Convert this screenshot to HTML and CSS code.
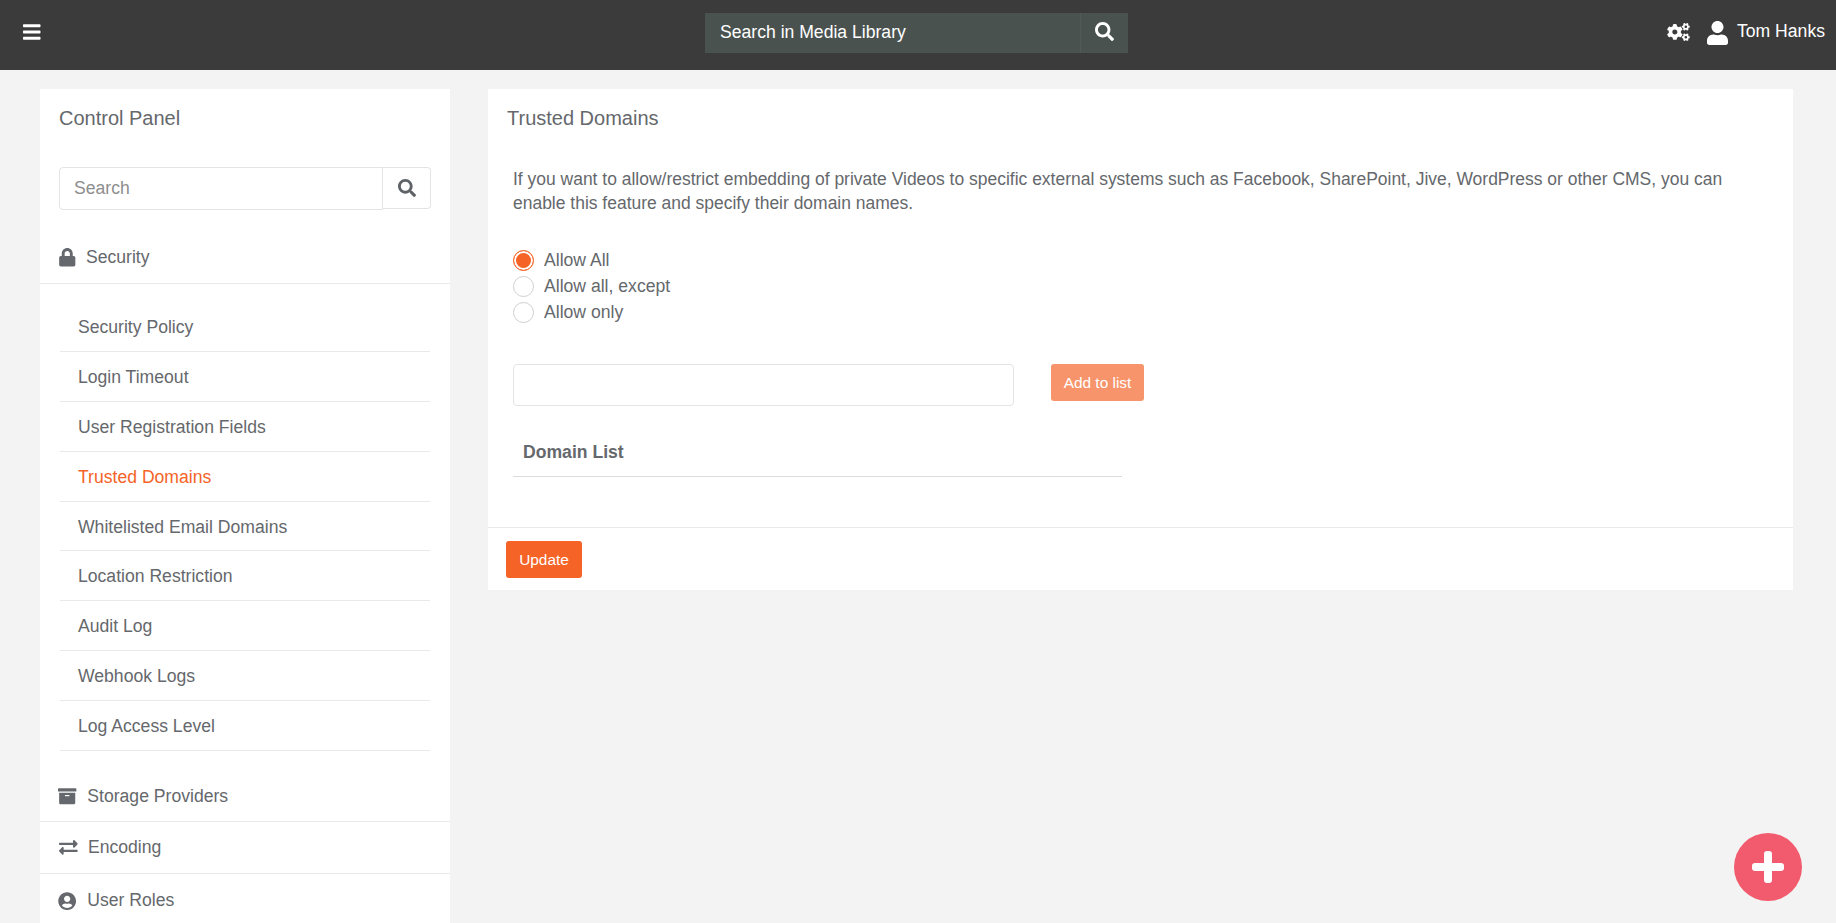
FILE: index.html
```html
<!DOCTYPE html>
<html lang="en">
<head>
<meta charset="utf-8">
<title>Trusted Domains</title>
<link rel="stylesheet" href="styles.css">
</head>
<body>
<header class="topbar">
  <div class="top-left">
    <svg class="ic-bars" viewBox="0 0 448 512"><path d="M16 132h416c8.837 0 16-7.163 16-16V76c0-8.837-7.163-16-16-16H16C7.163 60 0 67.163 0 76v40c0 8.837 7.163 16 16 16zm0 160h416c8.837 0 16-7.163 16-16v-40c0-8.837-7.163-16-16-16H16c-8.837 0-16 7.163-16 16v40c0 8.837 7.163 16 16 16zm0 160h416c8.837 0 16-7.163 16-16v-40c0-8.837-7.163-16-16-16H16c-8.837 0-16 7.163-16 16v40c0 8.837 7.163 16 16 16z"/></svg>
  </div>
  <div class="top-search">
    <span class="top-search-text">Search in Media Library</span>
    <span class="top-search-btn">
      <svg class="ic-search" viewBox="0 0 512 512"><path d="M505 442.7L405.3 343c-4.5-4.5-10.6-7-17-7H372c27.6-35.3 44-79.7 44-128C416 93.1 322.9 0 208 0S0 93.1 0 208s93.1 208 208 208c48.3 0 92.7-16.4 128-44v16.3c0 6.4 2.5 12.5 7 17l99.7 99.7c9.4 9.4 24.6 9.4 33.9 0l28.3-28.3c9.4-9.4 9.4-24.6.1-34zM208 336c-70.7 0-128-57.2-128-128 0-70.7 57.2-128 128-128 70.7 0 128 57.2 128 128 0 70.7-57.2 128-128 128z"/></svg>
    </span>
  </div>
  <div class="top-right">
    <svg class="ic-cogs" viewBox="0 0 640 512"><path d="M512.1 191l-8.2 14.3c-3 5.3-9.4 7.5-15.1 5.4-11.8-4.4-22.6-10.7-32.1-18.6-4.6-3.8-5.8-10.5-2.8-15.7l8.2-14.3c-6.9-8-12.3-17.3-15.9-27.4h-16.5c-6 0-11.2-4.3-12.2-10.3-2-12-2.1-24.6 0-37.1 1-6 6.2-10.4 12.2-10.4h16.5c3.6-10.1 9-19.4 15.9-27.4l-8.2-14.3c-3-5.2-1.9-11.9 2.8-15.7 9.5-7.9 20.4-14.2 32.1-18.6 5.7-2.1 12.1.1 15.1 5.4l8.2 14.3c10.5-1.9 21.2-1.9 31.7 0L552 6.3c3-5.3 9.4-7.5 15.1-5.4 11.8 4.4 22.6 10.7 32.1 18.6 4.6 3.8 5.8 10.5 2.8 15.7l-8.2 14.3c6.9 8 12.3 17.3 15.9 27.4h16.5c6 0 11.2 4.3 12.2 10.3 2 12 2.1 24.6 0 37.1-1 6-6.2 10.4-12.2 10.4h-16.5c-3.6 10.1-9 19.4-15.9 27.4l8.2 14.3c3 5.2 1.9 11.9-2.8 15.7-9.5 7.9-20.4 14.2-32.1 18.6-5.7 2.1-12.1-.1-15.1-5.4l-8.2-14.3c-10.4 1.9-21.2 1.9-31.7 0zm-10.5-58.8c38.5 29.6 82.4-14.3 52.8-52.8-38.5-29.7-82.4 14.3-52.8 52.8zM386.3 286.1l33.7 16.8c10.1 5.8 14.5 18.1 10.5 29.1-8.9 24.2-26.4 46.4-42.6 65.8-7.4 8.9-20.2 11.1-30.3 5.3l-29.1-16.8c-16 13.7-34.6 24.6-54.9 31.7v33.6c0 11.6-8.3 21.6-19.7 23.6-24.6 4.2-50.4 4.4-75.9 0-11.5-2-20-11.9-20-23.6V418c-20.3-7.2-38.9-18-54.9-31.7L74 403c-10 5.8-22.9 3.6-30.3-5.3-16.2-19.4-33.3-41.6-42.2-65.7-4-10.9.4-23.2 10.5-29.1l33.3-16.8c-3.9-20.9-3.9-42.4 0-63.4L12 205.8c-10.1-5.8-14.6-18.1-10.5-29 8.9-24.2 26-46.4 42.2-65.8 7.4-8.9 20.2-11.1 30.3-5.3l29.1 16.8c16-13.7 34.6-24.6 54.9-31.7V57.1c0-11.5 8.2-21.5 19.6-23.5 24.6-4.2 50.5-4.4 76-.1 11.5 2 20 11.9 20 23.6v33.6c20.3 7.2 38.9 18 54.9 31.7l29.1-16.8c10-5.8 22.9-3.6 30.3 5.3 16.2 19.4 33.2 41.6 42.1 65.8 4 10.9.1 23.2-10 29.1l-33.7 16.8c3.9 21 3.9 42.5 0 63.5zm-117.6 21.1c59.2-77-28.7-164.9-105.7-105.7-59.2 77 28.7 164.9 105.7 105.7zm243.4 182.7l-8.2 14.3c-3 5.3-9.4 7.5-15.1 5.4-11.8-4.4-22.6-10.7-32.1-18.6-4.6-3.8-5.8-10.5-2.8-15.7l8.2-14.3c-6.9-8-12.3-17.3-15.9-27.4h-16.5c-6 0-11.2-4.3-12.2-10.3-2-12-2.1-24.6 0-37.1 1-6 6.2-10.4 12.2-10.4h16.5c3.6-10.1 9-19.4 15.9-27.4l-8.2-14.3c-3-5.2-1.9-11.9 2.8-15.7 9.5-7.9 20.4-14.2 32.1-18.6 5.7-2.1 12.1.1 15.1 5.4l8.2 14.3c10.5-1.9 21.2-1.9 31.7 0l8.2-14.3c3-5.3 9.4-7.5 15.1-5.4 11.8 4.4 22.6 10.7 32.1 18.6 4.6 3.8 5.8 10.5 2.8 15.7l-8.2 14.3c6.9 8 12.3 17.3 15.9 27.4h16.5c6 0 11.2 4.3 12.2 10.3 2 12 2.1 24.6 0 37.1-1 6-6.2 10.4-12.2 10.4h-16.5c-3.6 10.1-9 19.4-15.9 27.4l8.2 14.3c3 5.2 1.9 11.9-2.8 15.7-9.5 7.9-20.4 14.2-32.1 18.6-5.7 2.1-12.1-.1-15.1-5.4l-8.2-14.3c-10.4 1.9-21.2 1.9-31.7 0zM501.6 431c38.5 29.6 82.4-14.3 52.8-52.8-38.5-29.6-82.4 14.3-52.8 52.8z"/></svg>
    <svg class="ic-user" viewBox="0 0 448 512"><path d="M224 256c70.7 0 128-57.3 128-128S294.7 0 224 0 96 57.3 96 128s57.3 128 128 128zm89.6 32h-16.7c-22.2 10.2-46.9 16-72.9 16s-50.6-5.8-72.9-16h-16.7C60.2 288 0 348.2 0 422.4V464c0 26.5 21.5 48 48 48h352c26.5 0 48-21.5 48-48v-41.6c0-74.2-60.2-134.4-134.4-134.4z"/></svg>
    <span class="user-name">Tom Hanks</span>
  </div>
</header>

<div class="page">
  <aside class="sidebar">
    <h2 class="side-title">Control Panel</h2>
    <div class="side-search">
      <input class="side-search-input" type="text" placeholder="Search">
      <span class="side-search-btn">
        <svg class="ic-search-dark" viewBox="0 0 512 512"><path d="M505 442.7L405.3 343c-4.5-4.5-10.6-7-17-7H372c27.6-35.3 44-79.7 44-128C416 93.1 322.9 0 208 0S0 93.1 0 208s93.1 208 208 208c48.3 0 92.7-16.4 128-44v16.3c0 6.4 2.5 12.5 7 17l99.7 99.7c9.4 9.4 24.6 9.4 33.9 0l28.3-28.3c9.4-9.4 9.4-24.6.1-34zM208 336c-70.7 0-128-57.2-128-128 0-70.7 57.2-128 128-128 70.7 0 128 57.2 128 128 0 70.7-57.2 128-128 128z"/></svg>
      </span>
    </div>
    <div class="section section-open">
      <svg class="ic-lock" viewBox="0 0 448 512"><path d="M400 224h-24v-72C376 68.2 307.8 0 224 0S72 68.2 72 152v72H48c-26.5 0-48 21.5-48 48v192c0 26.5 21.5 48 48 48h352c26.5 0 48-21.5 48-48V272c0-26.5-21.5-48-48-48zm-104 0H152v-72c0-39.7 32.3-72 72-72s72 32.3 72 72v72z"/></svg>
      <span>Security</span>
    </div>
    <ul class="sub-list">
      <li class="sub-item">Security Policy</li>
      <li class="sub-item">Login Timeout</li>
      <li class="sub-item">User Registration Fields</li>
      <li class="sub-item active">Trusted Domains</li>
      <li class="sub-item">Whitelisted Email Domains</li>
      <li class="sub-item">Location Restriction</li>
      <li class="sub-item">Audit Log</li>
      <li class="sub-item">Webhook Logs</li>
      <li class="sub-item">Log Access Level</li>
    </ul>
    <div class="section section-storage">
      <svg class="ic-archive" viewBox="0 0 512 512"><path d="M32 448c0 17.7 14.3 32 32 32h384c17.7 0 32-14.3 32-32V160H32v288zm160-212c0-6.6 5.4-12 12-12h104c6.6 0 12 5.4 12 12v8c0 6.6-5.4 12-12 12H204c-6.6 0-12-5.4-12-12v-8zM480 32H32C14.3 32 0 46.3 0 64v48c0 8.8 7.2 16 16 16h480c8.8 0 16-7.2 16-16V64c0-17.7-14.3-32-32-32z"/></svg>
      <span>Storage Providers</span>
    </div>
    <div class="section">
      <svg class="ic-exchange" viewBox="0 0 512 512"><path d="M0 168v-16c0-13.255 10.745-24 24-24h360V80c0-21.367 25.899-32.042 40.971-16.971l80 80c9.372 9.373 9.372 24.569 0 33.941l-80 80C409.956 271.982 384 261.456 384 240v-48H24c-13.255 0-24-10.745-24-24zm488 152H128v-48c0-21.314-25.862-32.08-40.971-16.971l-80 80c-9.372 9.373-9.372 24.569 0 33.941l80 80C102.057 463.997 128 453.437 128 432v-48h360c13.255 0 24-10.745 24-24v-16c0-13.255-10.745-24-24-24z"/></svg>
      <span>Encoding</span>
    </div>
    <div class="section">
      <svg class="ic-circle" viewBox="0 0 496 512"><path d="M248 8C111 8 0 119 0 256s111 248 248 248 248-111 248-248S385 8 248 8zm0 96c48.6 0 88 39.4 88 88s-39.4 88-88 88-88-39.4-88-88 39.4-88 88-88zm0 344c-58.7 0-111.3-26.6-146.5-68.2 18.8-35.4 55.6-59.8 98.5-59.8 2.4 0 4.8.4 7.1 1.1 13 4.2 26.6 6.9 40.9 6.9 14.3 0 28-2.7 40.9-6.9 2.3-.7 4.7-1.1 7.1-1.1 42.9 0 79.7 24.4 98.5 59.8C359.3 421.4 306.7 448 248 448z"/></svg>
      <span>User Roles</span>
    </div>
  </aside>

  <main class="panel">
    <h2 class="panel-title">Trusted Domains</h2>
    <div class="panel-body">
      <p class="intro">If you want to allow/restrict embedding of private Videos to specific external systems such as Facebook, SharePoint, Jive, WordPress or other CMS, you can enable this feature and specify their domain names.</p>
      <div class="radios">
        <label class="radio-row"><input class="radio" type="radio" name="mode" checked>Allow All</label>
        <label class="radio-row"><input class="radio" type="radio" name="mode">Allow all, except</label>
        <label class="radio-row"><input class="radio" type="radio" name="mode">Allow only</label>
      </div>
      <div class="add-row">
        <input class="domain-input" type="text">
        <button class="btn btn-light" type="button">Add to list</button>
      </div>
      <div class="domain-head">Domain List</div>
    </div>
    <div class="panel-foot">
      <button class="btn btn-primary" type="button">Update</button>
    </div>
  </main>
</div>

<div class="fab">
  <span class="fab-plus"></span>
</div>
</body>
</html>
```
FILE: styles.css
```css
* { box-sizing: border-box; }
html, body { height: 100%; }
body {
  margin: 0;
  background: #f3f3f3;
  color: #65686c;
  font-family: "Liberation Sans", Arial, sans-serif;
  font-size: 17.6px;
  overflow: hidden;
}

/* Top bar */
.topbar {
  height: 70px;
  background: #3b3b3b;
  color: #fff;
  display: grid;
  grid-template-columns: 682px 423px 1fr;
  align-items: start;
  padding: 0 11px 0 23px;
}
.top-left { padding-top: 22px; display: flex; }
.ic-bars { width: 17.5px; height: 20px; fill: #fff; }
.top-search {
  height: 40px;
  margin-top: 13px;
  background: #4a5250;
  display: flex;
}
.top-search-text {
  flex: 1;
  line-height: 38px;
  padding-left: 15px;
}
.top-search-btn {
  width: 48px;
  border-left: 1px solid #525a58;
  display: flex;
  justify-content: center;
  padding-top: 9px;
}
.ic-search { width: 19px; height: 19px; fill: #fff; }
.top-right {
  display: flex;
  justify-content: flex-end;
  align-items: flex-start;
  padding-top: 21px;
}
.ic-cogs { width: 23px; height: 18px; fill: #fff; margin: 2px 17px 0 0; }
.ic-user { width: 21px; height: 24px; fill: #fff; margin-right: 9px; }
.user-name { line-height: 20px; }

/* Page */
.page {
  display: flex;
  align-items: flex-start;
  gap: 38px;
  padding: 19px 43px 0 40px;
}

/* Sidebar */
.sidebar {
  width: 410px;
  flex: none;
  background: #fff;
  height: 900px;
}
.side-title, .panel-title {
  margin: 0;
  font-weight: 400;
  font-size: 20px;
  line-height: 24px;
}
.side-title { padding: 17px 19px 0; }
.side-search {
  display: flex;
  align-items: flex-start;
  margin: 37px 19px 0;
}
.side-search-input {
  flex: 1;
  min-width: 0;
  height: 43px;
  border: 1px solid #e4e4e4;
  border-radius: 4px 0 0 4px;
  padding: 0 14px;
  font: inherit;
  color: inherit;
  outline: none;
}
.side-search-input::placeholder { color: #8e8e8e; opacity: 1; }
.side-search-btn {
  width: 48px;
  height: 42px;
  border: 1px solid #e4e4e4;
  border-left: none;
  border-radius: 0 4px 4px 0;
  display: flex;
  justify-content: center;
  align-items: center;
}
.ic-search-dark { width: 18px; height: 18px; fill: #5f6368; }

.section {
  display: flex;
  align-items: center;
  height: 52px;
  padding-left: 19px;
  border-bottom: 1px solid #e9e9e9;
}
.section:last-child { border-bottom: none; padding-top: 2px; }
.section svg { fill: #65686c; flex: none; }
.section-open { height: 74px; padding-top: 22px; }
.section-storage { height: 71px; padding-top: 21px; }
.ic-lock { width: 16.5px; height: 18.5px; margin-right: 10.5px; }
.ic-archive { width: 18.4px; height: 18.4px; margin-right: 10.6px; margin-left: -0.7px; }
.ic-exchange { width: 18.7px; height: 18.7px; margin-right: 10.3px; }
.ic-circle { width: 18.3px; height: 18.3px; margin-right: 10.7px; margin-left: -0.7px; }

.sub-list {
  list-style: none;
  margin: 0;
  padding: 18px 20px 0;
}
.sub-item {
  height: 49.88px;
  line-height: 50px;
  padding-left: 18px;
  border-bottom: 1px solid #e9e9e9;
}
.sub-item.active { color: #f56327; }

/* Main panel */
.panel {
  flex: 1;
  background: #fff;
  height: 501px;
  min-width: 0;
  display: flex;
  flex-direction: column;
}
.panel-title { padding: 17px 19px 0; }
.panel-body { flex: 1; padding: 0 25px; }
.intro {
  margin: 37px 0 0;
  font-size: 17.48px;
  line-height: 24.2px;
  width: 1260px;
}
.radios {
  margin-top: 32px;
  display: flex;
  flex-direction: column;
}
.radio-row {
  display: flex;
  align-items: center;
  height: 26px;
  gap: 10px;
  padding-top: 1px;
}
.radio {
  appearance: none;
  -webkit-appearance: none;
  width: 21px;
  height: 21px;
  margin: 0 0 1px;
  border: 1px solid #d0d0d0;
  border-radius: 50%;
  background: #fff;
}
.radio:checked {
  border-color: #f56327;
  background: #f56327;
  box-shadow: inset 0 0 0 2px #fff;
}
.add-row {
  display: flex;
  align-items: flex-start;
  gap: 37px;
  margin-top: 39px;
}
.domain-input {
  width: 501px;
  height: 42px;
  border: 1px solid #e4e4e4;
  border-radius: 4px;
  outline: none;
  font: inherit;
}
.btn {
  border: none;
  border-radius: 3px;
  color: #fff;
  font-family: inherit;
  font-size: 15.4px;
  height: 37px;
  padding: 0;
}
.btn-light { background: #f7946b; width: 93px; }
.btn-primary { background: #f56327; width: 76px; }
.domain-head {
  width: 609px;
  height: 48px;
  margin-top: 23px;
  padding: 0 10px;
  line-height: 47px;
  font-weight: 700;
  border-bottom: 1px solid #dcdcdc;
}
.panel-foot {
  height: 63px;
  padding: 13px 18px 0;
  border-top: 1px solid #e9e9e9;
}

/* Floating action button */
.fab {
  position: fixed;
  left: 1734px;
  top: 833px;
  width: 68px;
  height: 68px;
  border-radius: 50%;
  background: #f25a6e;
}
.fab-plus::before, .fab-plus::after {
  content: "";
  position: absolute;
  background: #fff;
  border-radius: 3px;
}
.fab-plus::before { left: 18px; top: 30px; width: 32px; height: 8px; }
.fab-plus::after { left: 30px; top: 18px; width: 8px; height: 32px; }
```
